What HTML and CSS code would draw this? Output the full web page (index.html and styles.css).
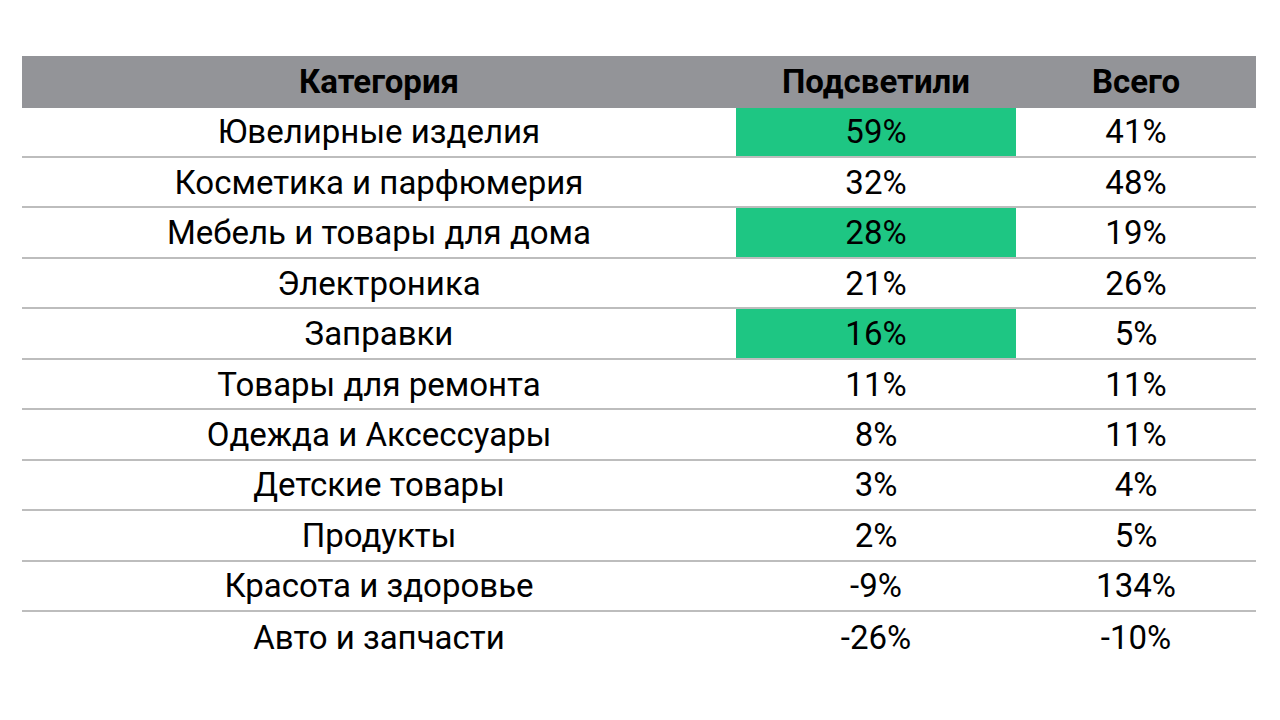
FILE: index.html
```html
<!DOCTYPE html>
<html lang="ru">
<head>
<meta charset="utf-8">
<link rel="stylesheet" href="styles.css">
</head>
<body>
<div class="page">
  <div class="table">
    <div class="row head">
      <div class="cell c1">Категория</div>
      <div class="cell c2">Подсветили</div>
      <div class="cell c3">Всего</div>
    </div>
    <div class="row">
      <div class="cell c1">Ювелирные изделия</div>
      <div class="cell c2 hl">59%</div>
      <div class="cell c3">41%</div>
    </div>
    <div class="row">
      <div class="cell c1">Косметика и парфюмерия</div>
      <div class="cell c2">32%</div>
      <div class="cell c3">48%</div>
    </div>
    <div class="row">
      <div class="cell c1">Мебель и товары для дома</div>
      <div class="cell c2 hl">28%</div>
      <div class="cell c3">19%</div>
    </div>
    <div class="row">
      <div class="cell c1">Электроника</div>
      <div class="cell c2">21%</div>
      <div class="cell c3">26%</div>
    </div>
    <div class="row">
      <div class="cell c1">Заправки</div>
      <div class="cell c2 hl">16%</div>
      <div class="cell c3">5%</div>
    </div>
    <div class="row">
      <div class="cell c1">Товары для ремонта</div>
      <div class="cell c2">11%</div>
      <div class="cell c3">11%</div>
    </div>
    <div class="row">
      <div class="cell c1">Одежда и Аксессуары</div>
      <div class="cell c2">8%</div>
      <div class="cell c3">11%</div>
    </div>
    <div class="row">
      <div class="cell c1">Детские товары</div>
      <div class="cell c2">3%</div>
      <div class="cell c3">4%</div>
    </div>
    <div class="row">
      <div class="cell c1">Продукты</div>
      <div class="cell c2">2%</div>
      <div class="cell c3">5%</div>
    </div>
    <div class="row">
      <div class="cell c1">Красота и здоровье</div>
      <div class="cell c2">-9%</div>
      <div class="cell c3">134%</div>
    </div>
    <div class="row last">
      <div class="cell c1">Авто и запчасти</div>
      <div class="cell c2">-26%</div>
      <div class="cell c3">-10%</div>
    </div>
  </div>
</div>
</body>
</html>
```

FILE: styles.css
```css
html, body {
  margin: 0;
  padding: 0;
  background: #ffffff;
}
.page {
  width: 1280px;
  height: 720px;
  padding: 56px 0 0 22px;
  box-sizing: border-box;
  font-family: Roboto, "Liberation Sans", sans-serif;
  color: #000;
}
.table {
  width: 1234px;
  display: flex;
  flex-direction: column;
}
.row {
  display: grid;
  grid-template-columns: 714px 280px 240px;
  height: 50.44px;
  box-sizing: border-box;
  border-bottom: 2px solid #bdbdbd;
}
.row.head {
  background: #939498;
  height: 51.6px;
  border-bottom: 0;
  font-weight: 700;
}
.row.last {
  border-bottom: 0;
}
.cell {
  display: flex;
  align-items: center;
  justify-content: center;
  font-size: 33px;
  line-height: 1;
  white-space: nowrap;
}
.cell.hl {
  background: #1ec683;
}
```
